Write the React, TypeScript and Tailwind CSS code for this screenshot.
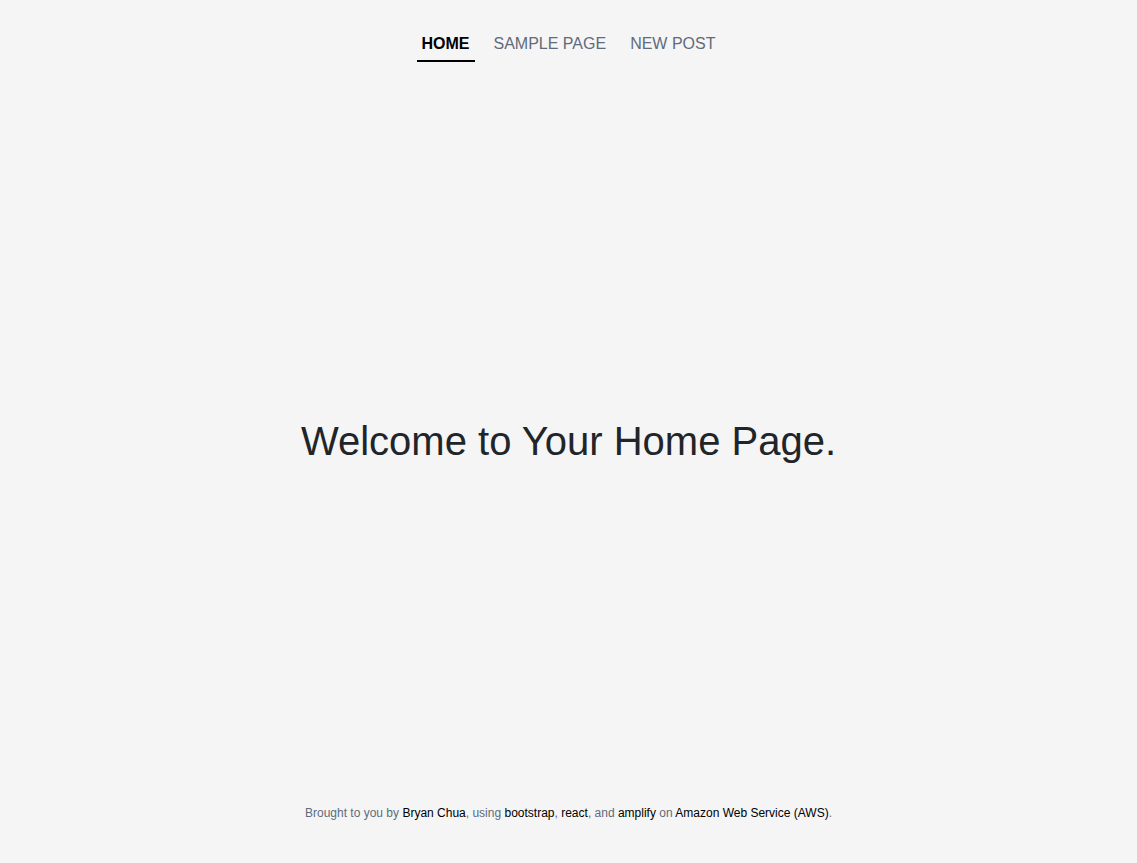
const NavLink = ({ label, active }: { label: string; active?: boolean }) => (
  <a
    href="#"
    className={
      active
        ? "block border-b-2 border-black px-[5px] pt-[8px] pb-[4px] font-bold text-black"
        : "block border-b-2 border-transparent px-[5px] pt-[8px] pb-[4px] text-[#5f6b7a]"
    }
  >
    {label}
  </a>
);

export default function App() {
  return (
    <div
      className="flex min-h-screen flex-col bg-[#f5f5f5] text-[#212529]"
      style={{ fontFamily: '"Liberation Sans", Arial, sans-serif' }}
    >
      {/* Nav */}
      <nav className="flex justify-center gap-[14px] pt-[24px] text-[16px] uppercase">
        <NavLink label="Home" active />
        <NavLink label="Sample Page" />
        <NavLink label="New Post" />
      </nav>

      {/* Content */}
      <main className="flex flex-1 items-center justify-center pt-[16px]">
        <h1 className="text-[40px] leading-tight">Welcome to Your Home Page.</h1>
      </main>

      {/* Footer */}
      <footer className="pb-[41px] text-center text-[12px] text-[#5f6b7a]">
        Brought to you by <a href="#" className="text-black">Bryan Chua</a>, using{" "}
        <a href="#" className="text-black">bootstrap</a>,{" "}
        <a href="#" className="text-black">react</a>, and{" "}
        <a href="#" className="text-black">amplify</a> on{" "}
        <a href="#" className="text-black">Amazon Web Service (AWS)</a>.
      </footer>
    </div>
  );
}
